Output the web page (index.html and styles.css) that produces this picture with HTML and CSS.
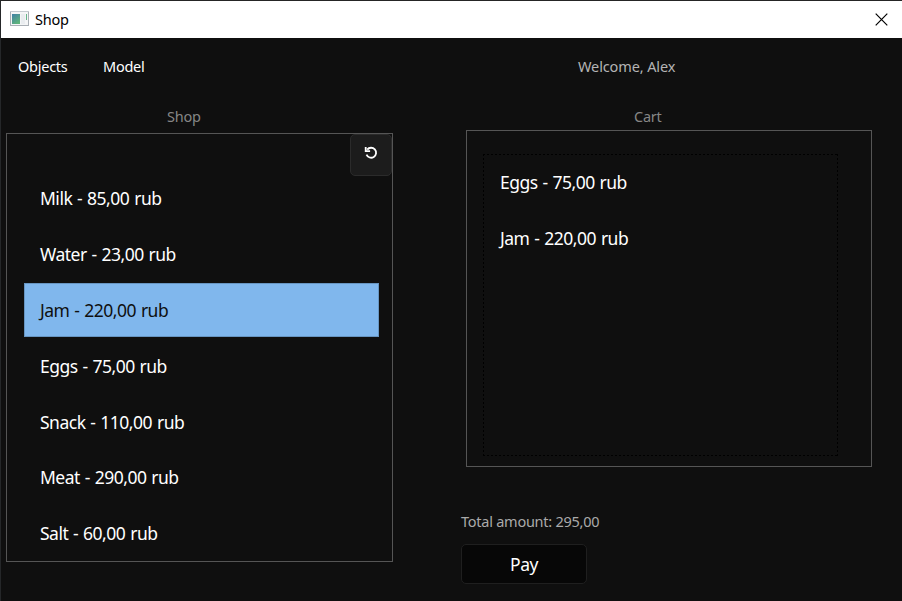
FILE: index.html
```html
<!DOCTYPE html>
<html lang="en">
<head>
<meta charset="utf-8">
<title>Shop</title>
<link rel="stylesheet" href="styles.css">
</head>
<body>
<div class="window">
  <header class="titlebar">
    <svg class="app-icon" width="19" height="16" viewBox="0 0 19 16">
      <defs><linearGradient id="g" x1="0" y1="0" x2="0.6" y2="1"><stop offset="0" stop-color="#3f7fa6"/><stop offset="1" stop-color="#5fb47c"/></linearGradient></defs>
      <rect x="0.5" y="0.5" width="18" height="14" fill="#f4f5f6" stroke="#a9afb5"/>
      <path d="M0 .5h19" stroke="#c5cad0"/>
      <rect x="2" y="3" width="8" height="10" fill="url(#g)"/>
      <rect x="11" y="3" width="4" height="10" fill="#e9ecef"/>
      <rect x="16" y="3" width="1" height="6" fill="#68b58a"/>
    </svg>
    <span class="title">Shop</span>
    <svg class="close" width="13" height="13" viewBox="0 0 13 13"><path d="M.7.7l11.6 11.6M12.3.7L.7 12.3" stroke="#000" stroke-width="1.2"/></svg>
  </header>
  <nav class="menu">
    <span class="objects">Objects</span>
    <span class="model">Model</span>
    <span class="welcome">Welcome, Alex</span>
  </nav>
  <main class="content">
    <section class="shop">
      <h2 class="heading shop-heading"><span>Shop</span></h2>
      <div class="shop-frame">
        <button class="refresh" aria-label="Refresh">
          <svg width="14" height="14" viewBox="0 0 14 14" fill="none" stroke="#fff" stroke-width="1.8"><path d="M3.2 3.6A5 5 0 1 1 2.5 8.7"/><path d="M1.7.9v4.2h4.4"/></svg>
        </button>
        <ul class="list">
          <li><span>Milk - 85,00 rub</span></li>
          <li><span>Water - 23,00 rub</span></li>
          <li class="selected"><span>Jam - 220,00 rub</span></li>
          <li><span>Eggs - 75,00 rub</span></li>
          <li><span>Snack - 110,00 rub</span></li>
          <li><span>Meat - 290,00 rub</span></li>
          <li><span>Salt - 60,00 rub</span></li>
        </ul>
      </div>
    </section>
    <section class="cart">
      <h2 class="heading cart-heading"><span>Cart</span></h2>
      <div class="cart-frame">
        <ul class="list cart-list">
          <li><span>Eggs - 75,00 rub</span></li>
          <li><span>Jam - 220,00 rub</span></li>
        </ul>
      </div>
      <p class="total"><span>Total amount: 295,00</span></p>
      <button class="pay">Pay</button>
    </section>
  </main>
</div>
</body>
</html>
```
FILE: styles.css
```css
* { box-sizing: border-box; }
body {
  margin: 0;
  background: #0f0f0f;
  font-family: "Noto Sans", "Open Sans", sans-serif;
  font-size: 14.5px;
  letter-spacing: -0.25px;
  overflow: hidden;
}
.window {
  width: 902px;
  height: 601px;
  border-top: 1px solid #252525;
  border-left: 1px solid #252729;
  background: #0f0f0f;
}
.titlebar {
  display: flex;
  align-items: center;
  height: 37px;
  padding: 0 14px 0 9px;
  background: #fff;
  color: #000;
}
.app-icon { margin: 0 6px 1px 0; }
.title { padding-bottom: 2px; }
.close { margin: 0 0 1px auto; }
.menu {
  display: flex;
  height: 57px;
  padding-left: 17px;
  line-height: 57px;
  color: #fff;
}
.objects { width: 85px; }
.model { width: 475px; }
.welcome { color: #b4b4b4; letter-spacing: -0.12px; }
.content { display: flex; gap: 68px; padding-left: 5px; }
.shop { width: 387px; }
.heading {
  margin: 0;
  font-size: 14.5px;
  font-weight: 400;
  line-height: 20px;
  color: #868686;
}
.shop-heading { height: 38px; padding: 11px 0 0 161px; }
.shop-frame {
  position: relative;
  height: 429px;
  padding: 37.4px 13px 0 17px;
  border: 1px solid #555;
}
.refresh {
  position: absolute;
  top: 0;
  right: 0;
  display: flex;
  justify-content: center;
  width: 42px;
  height: 42px;
  padding: 11px 0 0;
  border: 1px solid #2b2b2b;
  border-radius: 5px;
  background: #1c1c1c;
}
.list {
  margin: 0;
  padding: 0;
  list-style: none;
  font-size: 17.5px;
  letter-spacing: -0.5px;
  word-spacing: 0.8px;
  color: #fff;
}
.list li {
  height: 54px;
  margin-bottom: 1.8px;
  padding-left: 16px;
  line-height: 54px;
}
.list .selected {
  background: #80b7ed;
  color: #0f0f0f;
  box-shadow: inset 0 0 0 1px #6795c1;
}
.cart { width: 411px; }
.cart-heading { height: 35px; padding: 11px 0 0 173px; }
.cart-frame {
  width: 406px;
  height: 337px;
  margin-left: 5px;
  padding: 23px 0 0 16px;
  border: 1px solid #555;
}
.cart-list {
  width: 355px;
  height: 302px;
  padding: 1px;
  background:
    repeating-linear-gradient(90deg, #000 0 2px, transparent 2px 4px) top / 100% 1px no-repeat,
    repeating-linear-gradient(90deg, #000 0 2px, transparent 2px 4px) bottom / 100% 1px no-repeat,
    repeating-linear-gradient(#000 0 2px, transparent 2px 4px) left / 1px 100% no-repeat,
    repeating-linear-gradient(#000 0 2px, transparent 2px 4px) right / 1px 100% no-repeat;
}
.cart-list li { padding-left: 16px; }
.total {
  height: 77px;
  margin: 0;
  padding-top: 43px;
  line-height: 22px;
  color: #aaa;
}
.pay {
  display: block;
  width: 126px;
  height: 40px;
  padding: 0;
  border: 1px solid #1f1f1f;
  border-radius: 5px;
  background: #070707;
  color: #fff;
  font: 17.5px "Noto Sans", "Open Sans", sans-serif;
  letter-spacing: -0.5px;
}
```
